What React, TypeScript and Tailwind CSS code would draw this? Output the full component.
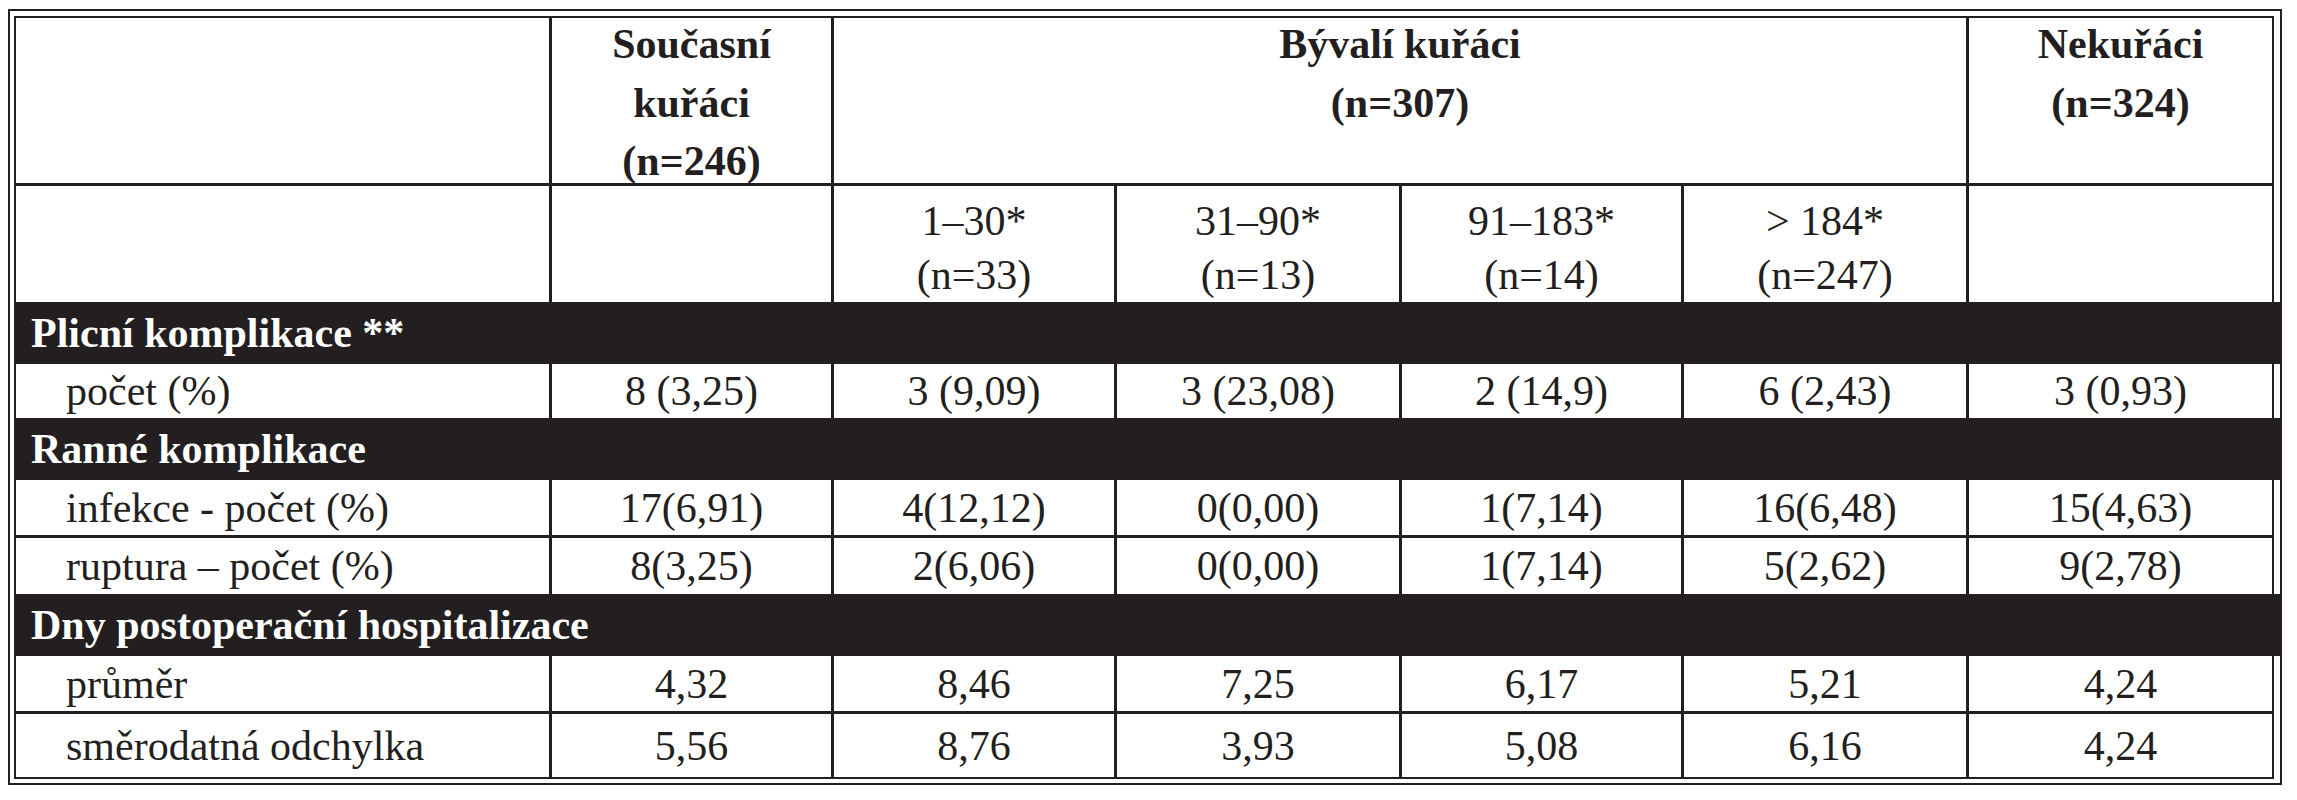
const serif = "font-['Liberation_Serif','Times_New_Roman',serif]";

type Row = { label: string; values: string[]; h: string; line: boolean };
type Section = { title: string; rows: Row[] };

const sections: Section[] = [
  {
    title: 'Plicní komplikace **',
    rows: [
      { label: 'počet (%)', values: ['8 (3,25)', '3 (9,09)', '3 (23,08)', '2 (14,9)', '6 (2,43)', '3 (0,93)'], h: 'h-[54px]', line: false },
    ],
  },
  {
    title: 'Ranné komplikace',
    rows: [
      { label: 'infekce - počet (%)', values: ['17(6,91)', '4(12,12)', '0(0,00)', '1(7,14)', '16(6,48)', '15(4,63)'], h: 'h-[58px]', line: true },
      { label: 'ruptura – počet (%)', values: ['8(3,25)', '2(6,06)', '0(0,00)', '1(7,14)', '5(2,62)', '9(2,78)'], h: 'h-[56px]', line: false },
    ],
  },
  {
    title: 'Dny postoperační hospitalizace',
    rows: [
      { label: 'průměr', values: ['4,32', '8,46', '7,25', '6,17', '5,21', '4,24'], h: 'h-[58px]', line: true },
      { label: 'směrodatná odchylka', values: ['5,56', '8,76', '3,93', '5,08', '6,16', '4,24'], h: 'h-[64px]', line: false },
    ],
  },
];

const subGroups = [
  ['1–30*', '(n=33)'],
  ['31–90*', '(n=13)'],
  ['91–183*', '(n=14)'],
  ['> 184*', '(n=247)'],
];

function SectionRow({ title }: { title: string }) {
  return (
    <div className="col-span-7 -mr-[8px] flex h-[62px] items-center bg-[#231f20] pl-[15px] text-[42px] font-bold leading-none text-white">
      {title}
    </div>
  );
}

function DataRow({ row }: { row: Row }) {
  const bottom = row.line ? 'border-b-[3px]' : '';
  return (
    <>
      <div className={`flex ${row.h} items-center border-r-[3px] border-[#231f20] pl-[50px] ${bottom}`}>{row.label}</div>
      {row.values.map((v, i) => (
        <div
          key={i}
          className={`flex ${row.h} items-center justify-center border-[#231f20] ${i < 5 ? 'border-r-[3px]' : ''} ${bottom}`}
        >
          {v}
        </div>
      ))}
    </>
  );
}

export default function App() {
  return (
    <div className={`min-h-[800px] bg-white pl-[8px] pt-[9px] text-[#231f20] ${serif}`}>
      <div className="h-[776px] w-[2274px] border-2 border-[#231f20] pb-[4px] pl-[4px] pr-[6px] pt-[5px]">
        <div className="h-[763px] w-[2260px] border-2 border-[#231f20]">
          <div className="grid grid-cols-[536px_282px_283px_285px_282px_285px_303px] text-[42px] leading-none">
            {/* header row 1 */}
            <div className="h-[168px] border-b-[3px] border-r-[3px] border-[#231f20]" />
            <div className="h-[168px] border-b-[3px] border-r-[3px] border-[#231f20] text-center font-bold leading-[58.5px]">
              <div className="-mt-[3px]">
                Současní
                <br />
                kuřáci
                <br />
                (n=246)
              </div>
            </div>
            <div className="col-span-4 h-[168px] border-b-[3px] border-r-[3px] border-[#231f20] text-center font-bold leading-[58.5px]">
              <div className="-mt-[3px]">
                Bývalí kuřáci
                <br />
                (n=307)
              </div>
            </div>
            <div className="h-[168px] border-b-[3px] border-[#231f20] text-center font-bold leading-[58.5px]">
              <div className="-mt-[3px]">
                Nekuřáci
                <br />
                (n=324)
              </div>
            </div>

            {/* header row 2 */}
            <div className="h-[116px] border-r-[3px] border-[#231f20]" />
            <div className="h-[116px] border-r-[3px] border-[#231f20]" />
            {subGroups.map(([a, b]) => (
              <div key={a} className="h-[116px] border-r-[3px] border-[#231f20] pt-[8px] text-center leading-[54px]">
                {a}
                <br />
                {b}
              </div>
            ))}
            <div className="h-[116px]" />

            {sections.map((s) => (
              <div key={s.title} className="contents">
                <SectionRow title={s.title} />
                {s.rows.map((r) => (
                  <DataRow key={r.label} row={r} />
                ))}
              </div>
            ))}
          </div>
        </div>
      </div>
    </div>
  );
}
